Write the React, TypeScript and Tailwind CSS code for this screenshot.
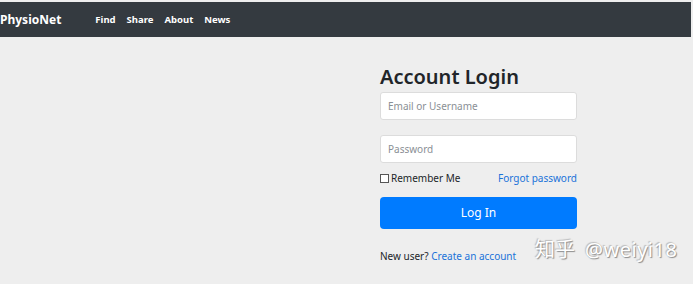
export default function App() {
  return (
    <div
      className="relative h-[284px] w-[693px] overflow-hidden bg-[#eeeeee] pt-[2px]"
      style={{ fontFamily: '"Noto Sans", "Open Sans", sans-serif' }}
    >
      {/* NAVBAR */}
      <nav className="flex h-[35px] w-[691px] items-center bg-[#343a40] text-white">
        <span className="text-[12px] font-bold leading-none">PhysioNet</span>
        <ul className="ml-[34px] flex gap-[11px] text-[9.5px] font-bold leading-none">
          <li>Find</li>
          <li>Share</li>
          <li>About</li>
          <li>News</li>
        </ul>
      </nav>

      {/* LOGIN */}
      <main className="grid grid-cols-[380px_197px]">
        <div />
        <form className="flex flex-col pt-[26px]">
          <h2 className="text-[20px] font-semibold leading-[28px] text-[#212529]">Account Login</h2>
          <input
            className="mt-[1px] h-[28px] rounded-[3px] border border-[#dcdcdc] bg-white px-[7px] text-[10px] text-[#495057] placeholder:text-[#8a8f95]"
            placeholder="Email or Username"
          />
          <input
            type="password"
            className="mt-[15px] h-[28px] rounded-[3px] border border-[#dcdcdc] bg-white px-[7px] text-[10px] text-[#495057] placeholder:text-[#8a8f95]"
            placeholder="Password"
          />
          <div className="mt-[8px] flex items-center justify-between text-[10px] leading-[14px]">
            <label className="flex items-center text-[#212529]">
              <span className="mr-[2px] inline-block h-[9px] w-[9px] border border-[#555] bg-white" />
              Remember Me
            </label>
            <a className="text-[#1a73d9]">Forgot password</a>
          </div>
          <button
            type="button"
            className="mt-[12px] h-[32px] rounded-[4px] bg-[#007bff] text-[12px] text-white"
          >
            Log In
          </button>
          <p className="mt-[20px] text-[10px] leading-[14px] text-[#212529]">
            New user? <a className="text-[#1a73d9]">Create an account</a>
          </p>
        </form>
      </main>

      {/* watermark */}
      <div
        className="absolute left-[535px] top-[237px] flex gap-[10px] text-[20px] leading-[26px] text-white"
        style={{
          fontFamily: '"Noto Sans", "Noto Sans CJK SC", sans-serif',
          textShadow: '1px 1px 1px #8a8a8a, -1px -1px 1px #bcbcbc',
        }}
      >
        <span>知乎</span>
        <span className="tracking-[0.5px]">@weiyi18</span>
      </div>
    </div>
  )
}
